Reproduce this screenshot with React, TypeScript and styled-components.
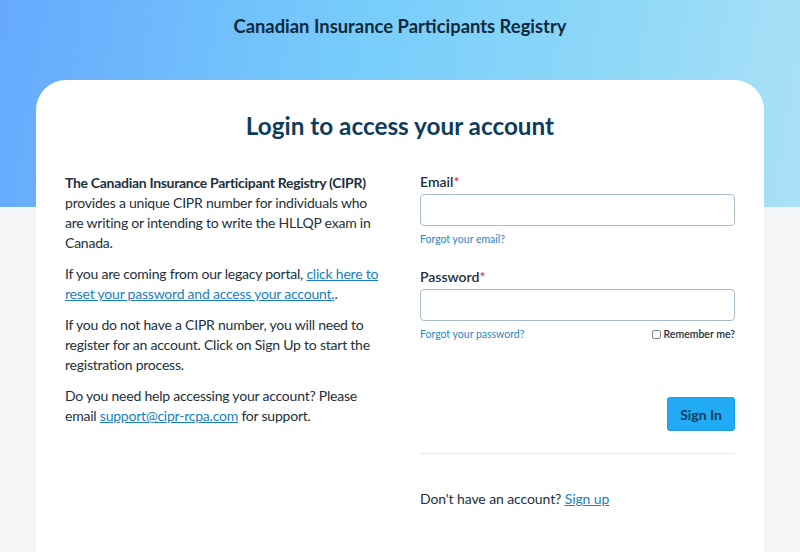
import React from "react";
import styled, { createGlobalStyle } from "styled-components";

const GlobalStyle = createGlobalStyle`
  * { box-sizing: border-box; }
  body {
    margin: 0;
    font-family: "Lato", "Noto Sans", sans-serif;
    color: #22303c;
    background: #f3f5f7;
  }
`;

const Page = styled.div`
  min-height: 552px;
  padding: 0 36px;
  background-color: #f3f5f7;
  background-image: linear-gradient(100deg, #66a9fd 0%, #78cdfb 45%, #8fd8f8 75%, #abe1f6 100%);
  background-size: 100% 207px;
  background-repeat: no-repeat;
`;

const Header = styled.header`
  height: 52px;
  display: flex;
  align-items: center;
  justify-content: center;
`;

const SiteTitle = styled.div`
  font-size: 18.4px;
  font-weight: 700;
  color: #10293b;
`;

const Card = styled.main`
  margin-top: 28px;
  background: #fff;
  border-radius: 30px 30px 0 0;
  padding: 31px 29px 60px;
  min-height: 520px;
`;

const Heading = styled.h1`
  margin: 0 0 31px;
  text-align: center;
  font-size: 24.3px;
  line-height: 30px;
  font-weight: 700;
  color: #0e3d5c;
`;

const Columns = styled.div`
  display: grid;
  grid-template-columns: 1fr 1fr;
  column-gap: 40px;
`;

const Info = styled.div`
  font-size: 14px;
  line-height: 20px;
  letter-spacing: -0.22px;
  padding-top: 1px;
`;

const Para = styled.p`
  margin: 0 0 11px;
`;

const Strong = styled.strong`
  font-weight: 700;
  letter-spacing: -0.3px;
`;

const Link = styled.a`
  color: #1a7fc0;
  text-decoration: underline;
`;

const Form = styled.form`
  display: flex;
  flex-direction: column;
`;

const Label = styled.label<{ $top?: number }>`
  display: block;
  font-size: 14px;
  line-height: 20px;
  font-weight: 600;
  margin-top: ${(p) => p.$top ?? 0}px;
  margin-bottom: 2px;
`;

const Star = styled.span`
  color: #d6453d;
`;

const Input = styled.input`
  width: 100%;
  height: 32px;
  border: 1px solid #a7bdcb;
  border-radius: 4px;
  outline: none;
  font: inherit;
  padding: 0 8px;
`;

const Row = styled.div`
  margin-top: 6px;
  display: flex;
  justify-content: space-between;
  align-items: center;
  font-size: 10.5px;
  line-height: 14px;
`;

const SmallLink = styled.a`
  color: #2a87c6;
  text-decoration: none;
`;

const Remember = styled.label`
  display: flex;
  align-items: center;
  gap: 3px;
  font-weight: 600;
  color: #22303c;
`;

const Check = styled.span`
  width: 9px;
  height: 9px;
  border: 1px solid #7a8791;
  border-radius: 2px;
`;

const Actions = styled.div`
  margin-top: 56px;
  display: flex;
  justify-content: flex-end;
`;

const Button = styled.button`
  height: 34px;
  padding: 0 12px;
  background: #21aaf5;
  border: 1px solid #1b9ce4;
  border-radius: 3px;
  color: #0e3d5c;
  font: inherit;
  font-size: 14px;
  font-weight: 700;
`;

const Divider = styled.hr`
  margin: 22px 0 0;
  border: 0;
  height: 1px;
  background: #dfedf4;
`;

const SignUp = styled.p`
  margin: 35px 0 0;
  font-size: 14px;
  line-height: 20px;
  letter-spacing: -0.1px;
`;

export default function App() {
  return (
    <>
      <GlobalStyle />
      <Page>
        <Header>
          <SiteTitle>Canadian Insurance Participants Registry</SiteTitle>
        </Header>
        <Card>
          <Heading>Login to access your account</Heading>
          <Columns>
            <Info>
              <Para>
                <Strong>The Canadian Insurance Participant Registry (CIPR)</Strong> provides a
                unique CIPR number for individuals who are writing or intending to write the HLLQP
                exam in Canada.
              </Para>
              <Para>
                If you are coming from our legacy portal,{" "}
                <Link href="#">click here to reset your password and access your account.</Link>.
              </Para>
              <Para>
                If you do not have a CIPR number, you will need to register for an account. Click
                on Sign Up to start the registration process.
              </Para>
              <Para>
                Do you need help accessing your account? Please email{" "}
                <Link href="#">support@cipr-rcpa.com</Link> for support.
              </Para>
            </Info>
            <Form onSubmit={(e) => e.preventDefault()}>
              <Label>
                Email<Star>*</Star>
              </Label>
              <Input type="email" />
              <Row>
                <SmallLink href="#">Forgot your email?</SmallLink>
              </Row>
              <Label $top={21}>
                Password<Star>*</Star>
              </Label>
              <Input type="password" />
              <Row>
                <SmallLink href="#">Forgot your password?</SmallLink>
                <Remember>
                  <Check />
                  Remember me?
                </Remember>
              </Row>
              <Actions>
                <Button type="submit">Sign In</Button>
              </Actions>
              <Divider />
              <SignUp>
                Don't have an account? <Link href="#">Sign up</Link>
              </SignUp>
            </Form>
          </Columns>
        </Card>
      </Page>
    </>
  );
}
